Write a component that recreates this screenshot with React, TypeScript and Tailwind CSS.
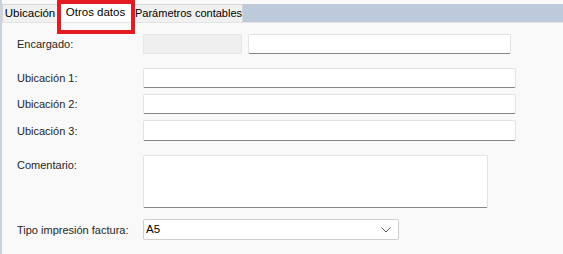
const font = { fontFamily: '"Segoe UI", "Liberation Sans", Arial, sans-serif' };

function Field({ className = '' }: { className?: string }) {
  return (
    <div
      className={`bg-white border border-[#e3e3e3] border-b-[#858585] rounded-[2px] ${className}`}
    />
  );
}

function Row({ label, children, className = '' }: { label: string; children: React.ReactNode; className?: string }) {
  return (
    <div className={`flex ${className}`}>
      <div className="w-[126px] shrink-0 text-[11px] text-[#262626] leading-[20px]">{label}</div>
      {children}
    </div>
  );
}

export default function App() {
  return (
    <div
      className="w-[563px] h-[254px] bg-[#f9f9f9] border-l-2 border-[#c9d3e0] overflow-hidden"
      style={font}
    >
      {/* tab strip */}
      <div className="relative flex items-end h-[23px] bg-[linear-gradient(to_bottom,#f9f9f9_4px,#bccadb_4px)] border-b border-[#e4e4e4]">
        <div className="w-[56px] h-[18px] bg-[#f0f0f0] border border-b-0 border-[#d6d6d6] text-[11.5px] text-black leading-[17px] text-center">
          Ubicación
        </div>
        <div className="w-[75px] h-[22px] bg-white border border-b-0 border-[#d6d6d6] text-[11.5px] text-black leading-[22px] text-center">
          Otros datos
        </div>
        <div className="w-[110px] h-[18px] pl-[2px] bg-[#f0f0f0] border border-b-0 border-l-0 border-[#d6d6d6] text-[11px] text-black leading-[17px] whitespace-nowrap">
          Parámetros contables
        </div>
        {/* highlight annotation */}
        <div className="absolute left-[55px] top-0 w-[78px] h-[34px] border-[4px] border-[#e41b23] pointer-events-none" />
      </div>

      <div className="pl-[15px] pt-[11px]">
        <Row label="Encargado:" className="items-center">
          <div className="w-[99px] h-[20px] bg-[#efefef] border border-[#e6e6e6] rounded-[1px]" />
          <Field className="ml-[6px] w-[263px] h-[20px]" />
        </Row>
        <Row label="Ubicación 1:" className="mt-[14px] items-center">
          <Field className="w-[373px] h-[20px]" />
        </Row>
        <Row label="Ubicación 2:" className="mt-[6px] items-center">
          <Field className="w-[373px] h-[20px]" />
        </Row>
        <Row label="Ubicación 3:" className="mt-[6px] items-center">
          <Field className="w-[373px] h-[21px]" />
        </Row>
        <Row label="Comentario:" className="mt-[14px] items-start">
          <Field className="w-[345px] h-[53px]" />
        </Row>
        <Row label="Tipo impresión factura:" className="mt-[11px] items-center">
          <div className="w-[256px] h-[21px] bg-white border border-[#cfcfcf] rounded-[2px] flex items-center justify-between pl-[2px] pr-[7px]">
            <span className="text-[11.5px] text-black">A5</span>
            <svg width="10" height="6" viewBox="0 0 10 6" fill="none">
              <path d="M0.5 0.5 L5 5 L9.5 0.5" stroke="#5a5a5a" strokeWidth="1" />
            </svg>
          </div>
        </Row>
      </div>
    </div>
  );
}
